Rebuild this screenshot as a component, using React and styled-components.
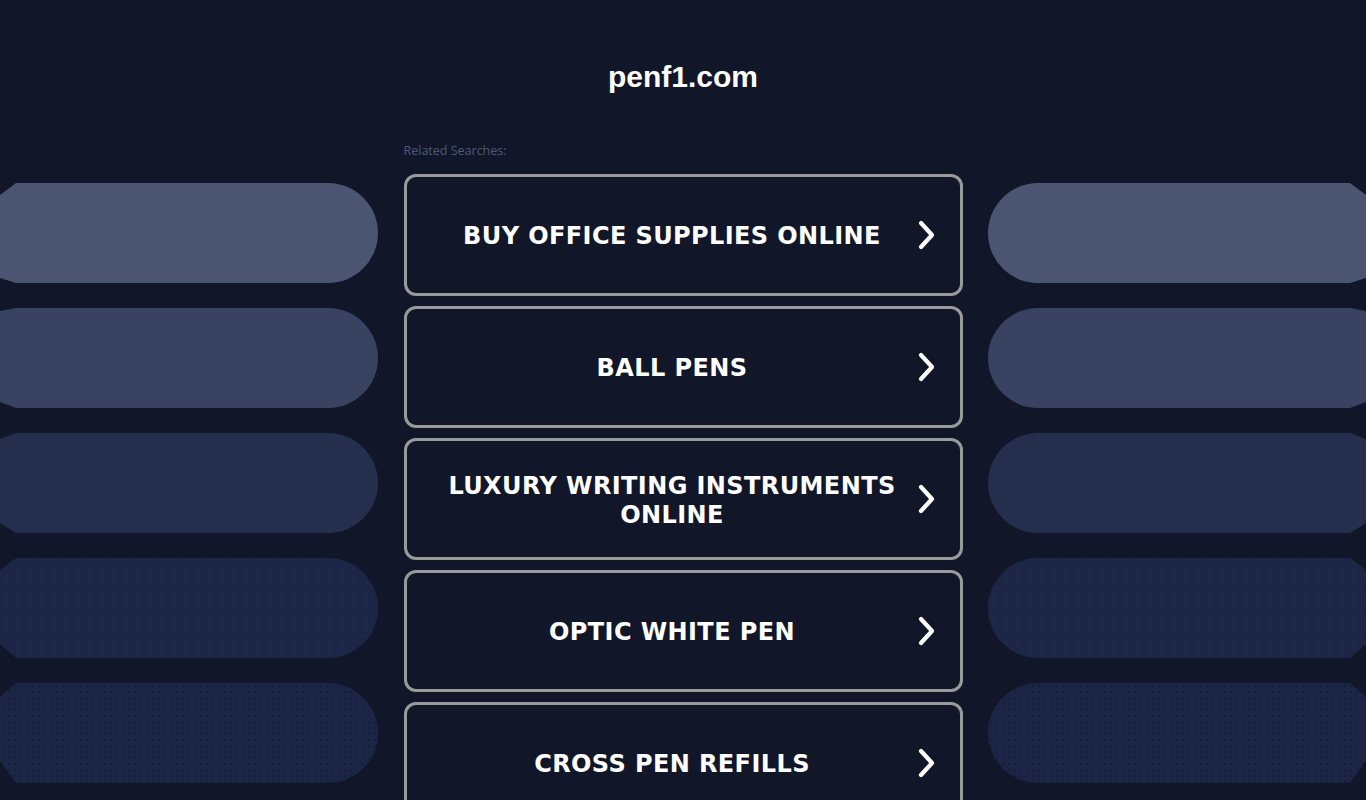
import React from "react";
import styled, { createGlobalStyle, css } from "styled-components";

const searches = [
  "BUY OFFICE SUPPLIES ONLINE",
  "BALL PENS",
  "LUXURY WRITING INSTRUMENTS ONLINE",
  "OPTIC WHITE PEN",
  "CROSS PEN REFILLS",
];

// decorative bars on both sides, lightest at the top
const bars = [
  { color: "#4b5572", top: 12, bottom: 5 },
  { color: "#394361", top: 3, bottom: 6 },
  { color: "#262e4d", top: 6, bottom: 10 },
  { color: "#1c2545", top: 12, bottom: 14, dots: "fine" },
  { color: "#1c2545", top: 14, bottom: 22, dots: "coarse" },
];

const GlobalStyle = createGlobalStyle`
  *, *::before, *::after { box-sizing: border-box; }
  html, body { margin: 0; padding: 0; }
  body {
    background: #111729;
    overflow: hidden;
    font-family: "DejaVu Sans", Verdana, sans-serif;
  }
`;

const Page = styled.div`
  width: 1366px;
  height: 800px;
  overflow: hidden;
  display: flex;
  flex-direction: column;
`;

const Header = styled.header`
  height: 140px;
  flex-shrink: 0;
  display: flex;
  justify-content: center;
  padding-top: 59px;
`;

const Title = styled.h1`
  margin: 0;
  font-family: "Liberation Sans", Arial, sans-serif;
  font-weight: 700;
  font-size: 30px;
  line-height: 36px;
  color: #ffffff;
`;

const Layout = styled.main`
  display: grid;
  grid-template-columns: 378px 559px 378px;
  justify-content: space-between;
  align-items: start;
`;

const Side = styled.div`
  display: flex;
  flex-direction: column;
  gap: 25px;
  padding-top: 43px;
`;

const dotted = {
  fine: css`
    background-image: radial-gradient(rgba(60, 75, 120, 0.2) 0.6px, transparent 0.9px);
    background-size: 3px 3px;
  `,
  coarse: css`
    background-image: radial-gradient(rgba(12, 18, 40, 0.35) 0.7px, transparent 1px);
    background-size: 6px 6px;
  `,
};

const Bar = styled.div`
  height: 100px;
  flex-shrink: 0;
  background-color: ${({ $color }) => $color};
  ${({ $dots }) => $dots && dotted[$dots]}
  border-radius: ${({ $side }) => ($side === "left" ? "0 50px 50px 0" : "50px 0 0 50px")};
  clip-path: ${({ $side, $top, $bottom }) =>
    $side === "left"
      ? `polygon(16px 0, 100% 0, 100% 100%, 16px 100%, 0 calc(100% - ${$bottom}px), 0 ${$top}px)`
      : `polygon(0 0, calc(100% - 16px) 0, 100% ${$top}px, 100% calc(100% - ${$bottom}px), calc(100% - 16px) 100%, 0 100%)`};
`;

const Center = styled.section`
  display: flex;
  flex-direction: column;
`;

const Label = styled.p`
  margin: 0 0 13px;
  height: 21px;
  display: flex;
  align-items: center;
  font-family: "Open Sans", "Liberation Sans", sans-serif;
  font-size: 12.5px;
  color: #4e5979;
`;

const List = styled.div`
  display: flex;
  flex-direction: column;
  gap: 10px;
`;

const Result = styled.a`
  height: 122px;
  flex-shrink: 0;
  display: flex;
  align-items: center;
  gap: 16px;
  padding: 0 23px 0 37px;
  border: 3px solid #9a9a9c;
  border-radius: 12px;
  color: #ffffff;
  text-decoration: none;
  cursor: pointer;
`;

const ResultText = styled.span`
  flex: 1;
  text-align: center;
  padding-top: 3px;
  font-family: "DejaVu Sans", Verdana, sans-serif;
  font-weight: 700;
  font-size: 24px;
  line-height: 29px;
  letter-spacing: 0.4px;
`;

const Chevron = () => (
  <svg width="20" height="30" viewBox="0 0 20 30" fill="none">
    <path
      d="M4 3 L15 15 L4 27"
      stroke="#ffffff"
      strokeWidth="4.2"
      strokeLinecap="round"
      strokeLinejoin="round"
    />
  </svg>
);

function App() {
  return (
    <Page>
      <GlobalStyle />
      <Header>
        <Title>penf1.com</Title>
      </Header>
      <Layout>
        <Side>
          {bars.map((b, i) => (
            <Bar key={i} $side="left" $color={b.color} $top={b.top} $bottom={b.bottom} $dots={b.dots} />
          ))}
        </Side>
        <Center>
          <Label>Related Searches:</Label>
          <List>
            {searches.map((s) => (
              <Result key={s}>
                <ResultText>{s}</ResultText>
                <Chevron />
              </Result>
            ))}
          </List>
        </Center>
        <Side>
          {bars.map((b, i) => (
            <Bar key={i} $side="right" $color={b.color} $top={b.top} $bottom={b.bottom} $dots={b.dots} />
          ))}
        </Side>
      </Layout>
    </Page>
  );
}

export default App;
